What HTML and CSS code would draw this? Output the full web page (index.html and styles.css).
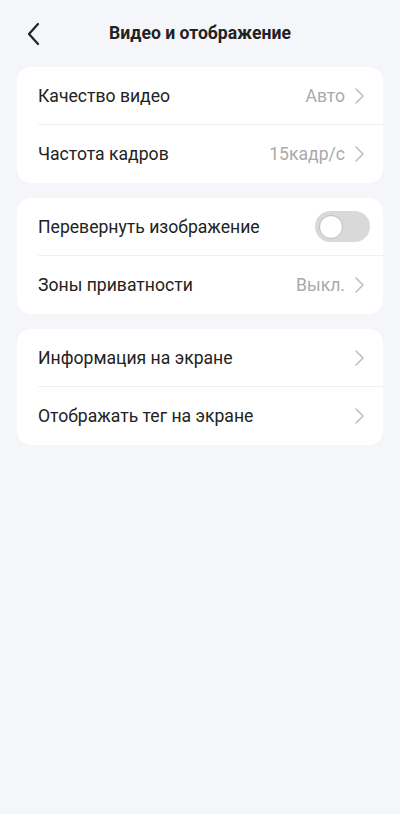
FILE: index.html
```html
<!DOCTYPE html>
<html lang="ru">
<head>
  <meta charset="UTF-8" />
  <meta name="viewport" content="width=device-width, initial-scale=1.0"/>
  <title>Видео и отображение</title>
  <link rel="stylesheet" href="styles.css">
</head>
<body>

  <header class="topbar">
    <button class="back" aria-label="Назад">
      <svg width="16" height="24" viewBox="0 0 16 24"><path d="M12 2 L3 12 L12 22" fill="none" stroke="#222" stroke-width="2.2" stroke-linecap="round" stroke-linejoin="round"/></svg>
    </button>
    <h1>Видео и отображение</h1>
  </header>

  <div class="card">
    <div class="row">
      <span class="label">Качество видео</span>
      <span class="value">Авто</span>
      <svg class="chev" width="9" height="16" viewBox="0 0 9 16"><path d="M1 1 L8 8 L1 15" fill="none" stroke="#bdbdbd" stroke-width="1.5" stroke-linecap="round" stroke-linejoin="round"/></svg>
    </div>
    <div class="row">
      <span class="label">Частота кадров</span>
      <span class="value">15кадр/с</span>
      <svg class="chev" width="9" height="16" viewBox="0 0 9 16"><path d="M1 1 L8 8 L1 15" fill="none" stroke="#bdbdbd" stroke-width="1.5" stroke-linecap="round" stroke-linejoin="round"/></svg>
    </div>
  </div>

  <div class="card">
    <div class="row">
      <span class="label">Перевернуть изображение</span>
      <span class="toggle"><span class="knob"></span></span>
    </div>
    <div class="row">
      <span class="label">Зоны приватности</span>
      <span class="value">Выкл.</span>
      <svg class="chev" width="9" height="16" viewBox="0 0 9 16"><path d="M1 1 L8 8 L1 15" fill="none" stroke="#bdbdbd" stroke-width="1.5" stroke-linecap="round" stroke-linejoin="round"/></svg>
    </div>
  </div>

  <div class="card">
    <div class="row">
      <span class="label">Информация на экране</span>
      <svg class="chev" width="9" height="16" viewBox="0 0 9 16"><path d="M1 1 L8 8 L1 15" fill="none" stroke="#bdbdbd" stroke-width="1.5" stroke-linecap="round" stroke-linejoin="round"/></svg>
    </div>
    <div class="row">
      <span class="label">Отображать тег на экране</span>
      <svg class="chev" width="9" height="16" viewBox="0 0 9 16"><path d="M1 1 L8 8 L1 15" fill="none" stroke="#bdbdbd" stroke-width="1.5" stroke-linecap="round" stroke-linejoin="round"/></svg>
    </div>
  </div>

</body>
</html>
```

FILE: styles.css
```css
body {
  margin: 0;
  padding: 0 17px;
  background: #f5f6fa;
  font-family: Roboto, 'Noto Sans', sans-serif;
  color: #222;
  min-height: 814px;
}
.topbar {
  position: relative;
  height: 67px;
  display: flex;
  align-items: center;
  justify-content: center;
}
.topbar h1 {
  margin: 0 0 1px;
  font-size: 17.6px;
  font-weight: 700;
  color: #222;
}
.back {
  position: absolute;
  left: 9px;
  top: 22px;
  background: none;
  border: 0;
  padding: 0;
  width: 16px;
  height: 24px;
}
.card {
  background: #fff;
  border-radius: 14px;
  margin-bottom: 15px;
}
.row {
  box-sizing: border-box;
  display: flex;
  align-items: center;
  height: 58px;
  margin-left: 21px;
  padding-right: 19px;
  border-bottom: 1px solid #f0f0f2;
}
.row:last-child {
  border-bottom: 0;
}
.label {
  flex: 1;
  font-size: 17.6px;
  color: #222;
}
.value {
  font-size: 17.6px;
  color: #aaa;
  margin-right: 10px;
}
.chev {
  display: block;
}
.toggle {
  position: relative;
  width: 55px;
  height: 31px;
  border-radius: 16px;
  background: #d9d9d9;
  margin-right: -6px;
}
.knob {
  position: absolute;
  left: 4px;
  top: 3.5px;
  width: 22px;
  height: 22px;
  border-radius: 50%;
  background: #fff;
  border: 1px solid #bcbcbc;
}
```
